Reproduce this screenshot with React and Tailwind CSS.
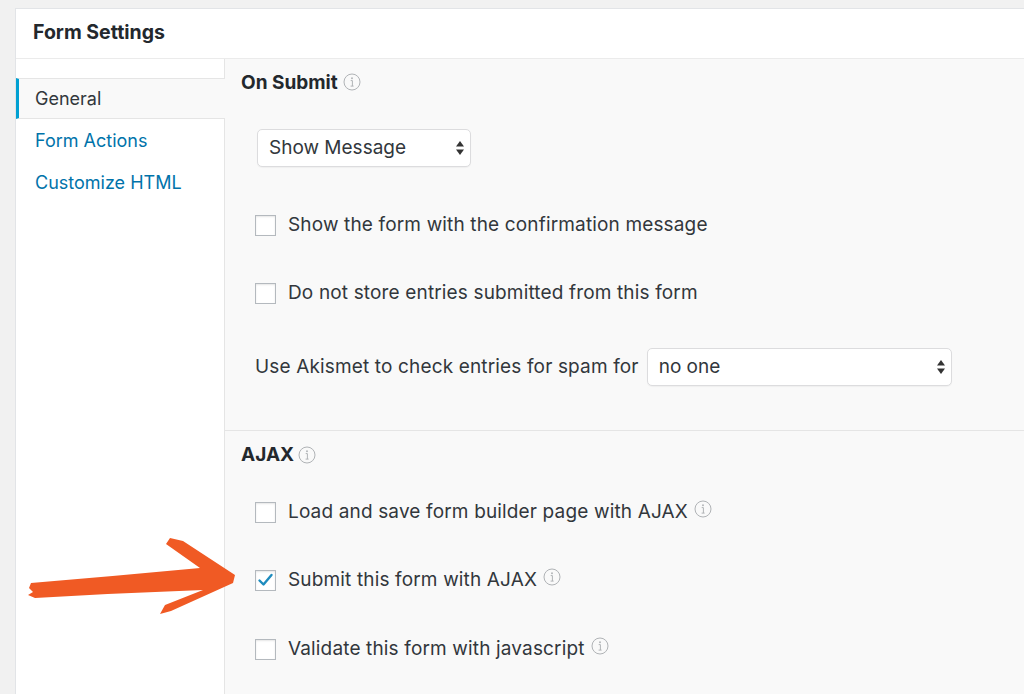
import React from "react";

function Info({ className = "" }) {
  return (
    <svg width="18" height="18" viewBox="0 0 18 18" className={className}>
      <circle cx="9" cy="9" r="8" fill="none" stroke="#b0b3b6" strokeWidth="1" />
      <circle cx="9" cy="5.2" r="0.95" fill="#b0b3b6" />
      <path d="M7.7 7.6 H9.4 V13 M7.6 13.1 H10.6" fill="none" stroke="#b0b3b6" strokeWidth="1" />
    </svg>
  );
}

function Arrows() {
  return (
    <svg width="10" height="16" viewBox="0 0 10 16">
      <path d="M5 1 L9 6.5 H1 Z" fill="#333" />
      <path d="M5 15 L9 9.5 H1 Z" fill="#333" />
    </svg>
  );
}

function Select({ label, className }) {
  return (
    <div
      className={`flex items-center justify-between h-[38px] bg-white border border-[#dcdcde] rounded-[5px] shadow-[0_1px_1px_rgba(0,0,0,0.04)] pl-[11px] pr-[5px] text-[19px] text-[#32373c] ${className}`}
    >
      <span>{label}</span>
      <Arrows />
    </div>
  );
}

function Checkbox({ checked }) {
  return (
    <div className="w-[21px] h-[21px] bg-white border border-[#b4b9be] shadow-[inset_0_1px_2px_rgba(0,0,0,0.1)] flex items-center justify-center shrink-0">
      {checked && (
        <svg width="17" height="15" viewBox="0 0 17 15">
          <path d="M2.5 7.5 L6.5 11.5 L14.5 2" fill="none" stroke="#1e8cbe" strokeWidth="2.4" strokeLinecap="round" strokeLinejoin="round" />
        </svg>
      )}
    </div>
  );
}

function CheckRow({ label, checked, info, className = "" }) {
  return (
    <div className={`h-[40px] flex items-center pl-[30px] ${className}`}>
      <Checkbox checked={checked} />
      <span className="ml-[12px] text-[19px] tracking-[0.15px] text-[#32373c]">{label}</span>
      {info && <Info className="ml-[6px] -mt-[6px]" />}
    </div>
  );
}

export default function App() {
  return (
    <div
      className="relative w-[1024px] h-[694px] overflow-hidden bg-[#f1f1f1] pt-[8px] pl-[15px]"
      style={{ fontFamily: "Inter, 'Liberation Sans', Arial, sans-serif" }}
    >
      <div className="w-[1030px] h-[700px] bg-white border-l border-t border-[#e2e4e7] flex flex-col">
        <div className="h-[50px] shrink-0 flex items-center pl-[17px] border-b border-[#ebebeb]">
          <h1 className="text-[19.5px] font-bold text-[#23282d] -mt-[2px]">Form Settings</h1>
        </div>
        <div className="flex flex-1">
          <div className="w-[209px] shrink-0 bg-white border-r border-[#e5e5e5] pt-[19px]">
            <div className="relative h-[41px] -mr-[1px] flex items-center pl-[16px] border-l-[3px] border-l-[#00a0d2] border-y border-y-[#e5e5e5] bg-[#f9f9f9] text-[18px] text-[#32373c]">
              General
            </div>
            <div className="h-[42px] flex items-center pl-[19px] text-[18px] text-[#0073aa]">Form Actions</div>
            <div className="h-[42px] flex items-center pl-[19px] text-[18px] text-[#0073aa]">Customize HTML</div>
          </div>
          <div className="flex-1 bg-[#f9f9f9]">
            <div className="border-b border-[#e5e5e5] pb-[44px]">
              <div className="h-[48px] flex items-center pl-[16px]">
                <span className="text-[19px] font-bold text-[#23282d]">On Submit</span>
                <Info className="ml-[5px] -mt-[2px]" />
              </div>
              <div className="mt-[22px] pl-[32px]">
                <Select label="Show Message" className="w-[214px]" />
              </div>
              <CheckRow label="Show the form with the confirmation message" className="mt-[38px]" />
              <CheckRow label="Do not store entries submitted from this form" className="mt-[28px]" />
              <div className="mt-[35px] pl-[30px] flex items-center">
                <span className="text-[19px] tracking-[0.15px] text-[#32373c] mr-[8px]">Use Akismet to check entries for spam for</span>
                <Select label="no one" className="w-[305px]" />
              </div>
            </div>
            <div>
              <div className="h-[48px] flex items-center pl-[16px]">
                <span className="text-[19px] font-bold text-[#23282d]">AJAX</span>
                <Info className="ml-[4px] -mt-[1px]" />
              </div>
              <CheckRow label="Load and save form builder page with AJAX" info className="mt-[13px]" />
              <CheckRow label="Submit this form with AJAX" checked info className="mt-[28px]" />
              <CheckRow label="Validate this form with javascript" info className="mt-[29px]" />
            </div>
          </div>
        </div>
      </div>
      <svg
        className="absolute left-[25px] top-[535px]"
        width="215"
        height="82"
        viewBox="0 0 215 82"
      >
        <path
          d="M6 48 Q90 41 175 33 L141 9 L145 3 L158 6 L210 40 L208 48 L146 76 L135 79 L140 70 L178 55 Q95 58 10 63 L3 60 L8 57 L4 53 Z"
          fill="#f05a24"
        />
      </svg>
    </div>
  );
}
